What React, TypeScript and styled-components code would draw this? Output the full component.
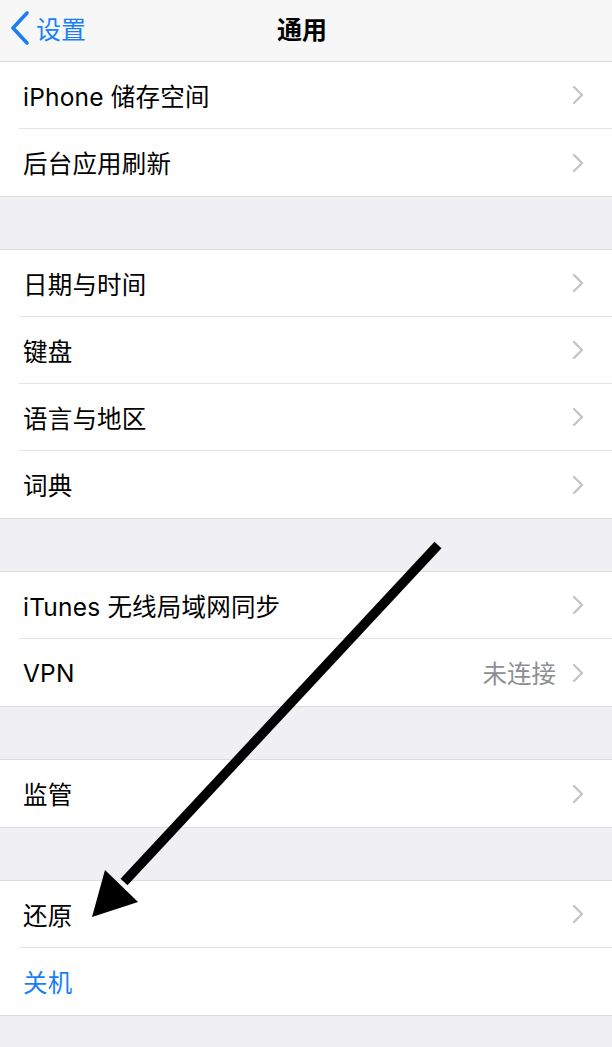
import styled, { createGlobalStyle } from 'styled-components';

const GlobalStyle = createGlobalStyle`
	html, body {
		margin: 0;
		padding: 0;
		background: #efeff4;
	}
	body {
		font-family: "Inter", "Noto Sans CJK SC", sans-serif;
		-webkit-font-smoothing: antialiased;
	}
`;

const Screen = styled.div`
	position: relative;
	width: 612px;
	min-height: 1047px;
	background: #efeff4;
	overflow: hidden;
`;

const NavBar = styled.header`
	position: relative;
	height: 62px;
	box-sizing: border-box;
	padding-bottom: 6px;
	display: flex;
	align-items: center;
	justify-content: center;
	background: #f7f7f7;
	border-bottom: 1px solid #d6d6da;
`;

const BackButton = styled.a`
	position: absolute;
	left: 10px;
	top: 0;
	bottom: 6px;
	display: flex;
	align-items: center;
	gap: 6px;
	color: #1a7ff5;
	font-size: 25px;
	text-decoration: none;
`;

const Title = styled.h1`
	margin: 0;
	font-size: 25px;
	font-weight: 600;
	color: #000;
	transform: translateX(-4px);
`;

const Group = styled.section<{ $first?: boolean }>`
	background: #fff;
	border-top: ${p => (p.$first ? 'none' : '1px solid #dcdce0')};
	border-bottom: 1px solid #dcdce0;
	margin-top: ${p => (p.$first ? '0' : '52px')};
`;

const Row = styled.div`
	height: 67px;
	padding-left: 19px;
	display: flex;
	align-items: stretch;
`;

const RowInner = styled.div<{ $last?: boolean }>`
	flex: 1;
	display: flex;
	align-items: center;
	padding-left: 4px;
	padding-right: 28px;
	box-sizing: border-box;
	border-bottom: ${p => (p.$last ? 'none' : '1px solid #e3e3e6')};
`;

const Label = styled.span<{ $action?: boolean }>`
	flex: 1;
	font-size: 24.5px;
	color: ${p => (p.$action ? '#1a7ff5' : '#000')};
	letter-spacing: 0.2px;
`;

const Detail = styled.span`
	font-size: 24.5px;
	color: #8e8e93;
	margin-right: 16px;
`;

const Overlay = styled.svg`
	position: absolute;
	left: 0;
	top: 0;
	pointer-events: none;
`;

const BackChevron = () => (
	<svg width="20" height="34" viewBox="0 0 20 34">
		<path d="M17 2 L3 17 L17 32" fill="none" stroke="#1a7ff5" strokeWidth="3.6" strokeLinecap="round" strokeLinejoin="round" />
	</svg>
);

const Chevron = () => (
	<svg width="12" height="20" viewBox="0 0 12 20">
		<path d="M2 2 L10 10 L2 18" fill="none" stroke="#c4c4c9" strokeWidth="2.4" strokeLinecap="round" strokeLinejoin="round" />
	</svg>
);

type Item = { label: string; detail?: string; action?: boolean };

const groups: Item[][] = [
	[{ label: 'iPhone 储存空间' }, { label: '后台应用刷新' }],
	[{ label: '日期与时间' }, { label: '键盘' }, { label: '语言与地区' }, { label: '词典' }],
	[{ label: 'iTunes 无线局域网同步' }, { label: 'VPN', detail: '未连接' }],
	[{ label: '监管' }],
	[{ label: '还原' }, { label: '关机', action: true }],
];

export default function App() {
	return (
		<>
			<GlobalStyle />
			<Screen>
				<NavBar>
					<BackButton href="#">
						<BackChevron />
						设置
					</BackButton>
					<Title>通用</Title>
				</NavBar>

				{groups.map((items, gi) => (
					<Group key={gi} $first={gi === 0}>
						{items.map((item, i) => (
							<Row key={item.label}>
								<RowInner $last={i === items.length - 1}>
									<Label $action={item.action}>{item.label}</Label>
									{item.detail && <Detail>{item.detail}</Detail>}
									{!item.action && <Chevron />}
								</RowInner>
							</Row>
						))}
					</Group>
				))}

				{/* pointer arrow drawn over the list */}
				<Overlay width="612" height="1047" viewBox="0 0 612 1047">
					<line x1="438" y1="545" x2="124" y2="882" stroke="#000" strokeWidth="9.5" />
					<polygon points="92,917 105,870 138,902" fill="#000" />
				</Overlay>
			</Screen>
		</>
	);
}
